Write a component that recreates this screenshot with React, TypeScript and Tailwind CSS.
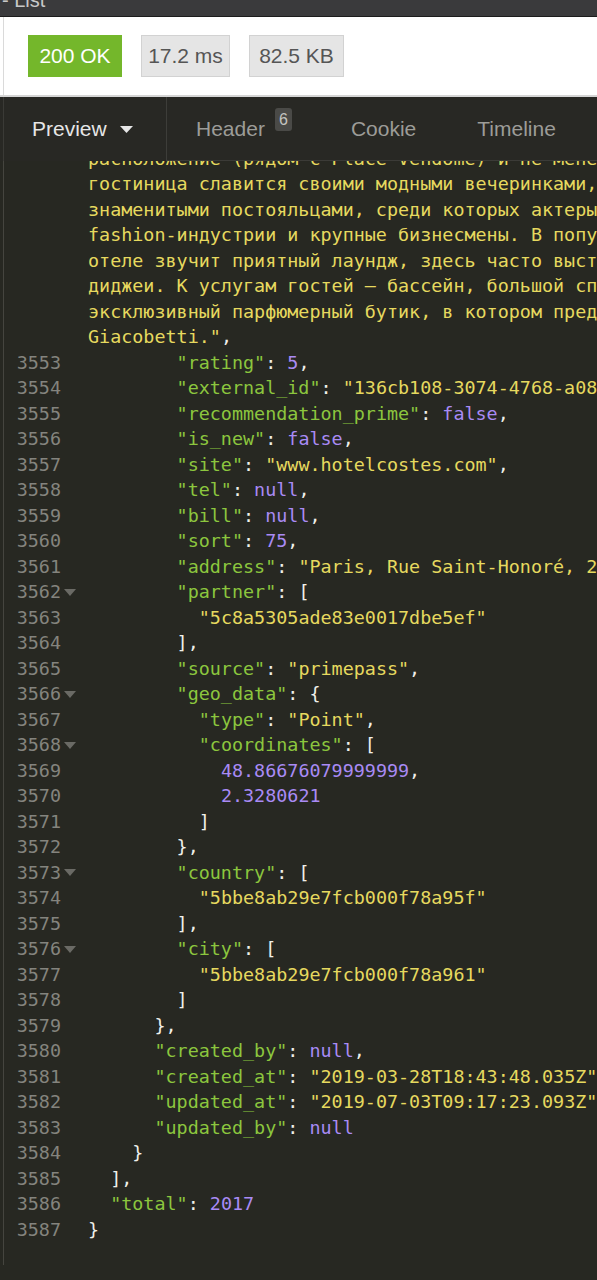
type Seg = [string, string];

const K = "text-[#8cc63e]";
const S = "text-[#e6d95f]";
const N = "text-[#a98bf5]";
const P = "text-[#f0f0ea]";

type Line = { n?: number; fold?: boolean; indent: number; segs: Seg[] };

function kv(key: string, value: string, color: string, comma = true): Seg[] {
  const out: Seg[] = [
    [`"${key}"`, K],
    [": ", P],
    [value, color],
  ];
  if (comma) out.push([",", P]);
  return out;
}

function open(key: string, br: string): Seg[] {
  return [
    [`"${key}"`, K],
    [": " + br, P],
  ];
}

const wrapped = [
  "расположение (рядом с Place Vendome) и не менее известный интерьер. Эта",
  "гостиница славится своими модными вечеринками, на которые приходят",
  "знаменитыми постояльцами, среди которых актеры, музыканты, звезды",
  "fashion-индустрии и крупные бизнесмены. В популярном ресторане при",
  "отеле звучит приятный лаундж, здесь часто выступают известные",
  "диджеи. К услугам гостей — бассейн, большой спа-центр, фитнес-зал и",
  "эксклюзивный парфюмерный бутик, в котором представлены ароматы Olivia",
];

const lines: Line[] = [
  ...wrapped.map((t) => ({ indent: 0, segs: [[t, S]] as Seg[] })),
  { indent: 0, segs: [['Giacobetti."', S], [",", P]] },
  { n: 3553, indent: 8, segs: kv("rating", "5", N) },
  { n: 3554, indent: 8, segs: kv("external_id", '"136cb108-3074-4768-a08e-5d2f1c9b7e41"', S) },
  { n: 3555, indent: 8, segs: kv("recommendation_prime", "false", N) },
  { n: 3556, indent: 8, segs: kv("is_new", "false", N) },
  { n: 3557, indent: 8, segs: kv("site", '"www.hotelcostes.com"', S) },
  { n: 3558, indent: 8, segs: kv("tel", "null", N) },
  { n: 3559, indent: 8, segs: kv("bill", "null", N) },
  { n: 3560, indent: 8, segs: kv("sort", "75", N) },
  { n: 3561, indent: 8, segs: kv("address", '"Paris, Rue Saint-Honoré, 239"', S) },
  { n: 3562, fold: true, indent: 8, segs: open("partner", "[") },
  { n: 3563, indent: 10, segs: [['"5c8a5305ade83e0017dbe5ef"', S]] },
  { n: 3564, indent: 8, segs: [["],", P]] },
  { n: 3565, indent: 8, segs: kv("source", '"primepass"', S) },
  { n: 3566, fold: true, indent: 8, segs: open("geo_data", "{") },
  { n: 3567, indent: 10, segs: kv("type", '"Point"', S) },
  { n: 3568, fold: true, indent: 10, segs: open("coordinates", "[") },
  { n: 3569, indent: 12, segs: [["48.86676079999999", N], [",", P]] },
  { n: 3570, indent: 12, segs: [["2.3280621", N]] },
  { n: 3571, indent: 10, segs: [["]", P]] },
  { n: 3572, indent: 8, segs: [["},", P]] },
  { n: 3573, fold: true, indent: 8, segs: open("country", "[") },
  { n: 3574, indent: 10, segs: [['"5bbe8ab29e7fcb000f78a95f"', S]] },
  { n: 3575, indent: 8, segs: [["],", P]] },
  { n: 3576, fold: true, indent: 8, segs: open("city", "[") },
  { n: 3577, indent: 10, segs: [['"5bbe8ab29e7fcb000f78a961"', S]] },
  { n: 3578, indent: 8, segs: [["]", P]] },
  { n: 3579, indent: 6, segs: [["},", P]] },
  { n: 3580, indent: 6, segs: kv("created_by", "null", N) },
  { n: 3581, indent: 6, segs: kv("created_at", '"2019-03-28T18:43:48.035Z"', S) },
  { n: 3582, indent: 6, segs: kv("updated_at", '"2019-07-03T09:17:23.093Z"', S) },
  { n: 3583, indent: 6, segs: kv("updated_by", "null", N, false) },
  { n: 3584, indent: 4, segs: [["}", P]] },
  { n: 3585, indent: 2, segs: [["],", P]] },
  { n: 3586, indent: 2, segs: kv("total", "2017", N, false) },
  { n: 3587, indent: 0, segs: [["}", P]] },
];

function CodeLine({ line }: { line: Line }) {
  return (
    <div className="flex h-[25.5px] items-center whitespace-pre">
      <div className="w-[57px] shrink-0 text-right text-[#84847e]">{line.n ?? ""}</div>
      <div className="w-[27px] shrink-0 pl-[3px]">
        {line.fold && (
          <svg width="12" height="7" viewBox="0 0 12 7">
            <path d="M0 0h12L6 7z" fill="#6a6a65" />
          </svg>
        )}
      </div>
      <div>
        {" ".repeat(line.indent)}
        {line.segs.map(([t, c], i) => (
          <span key={i} className={c}>
            {t}
          </span>
        ))}
      </div>
    </div>
  );
}

export default function App() {
  return (
    <div className="h-screen flex flex-col overflow-hidden font-['Liberation_Sans',Arial,sans-serif]">
      {/* window title strip, cut off at top */}
      <div className="h-[17px] shrink-0 overflow-hidden bg-[#3a3a3c] border-b border-[#1c1c1c]">
        <div className="-mt-[12px] pl-[2px] text-[20px] leading-[24px] text-[#c8c8c8]">- List</div>
      </div>

      {/* status row */}
      <div className="shrink-0 bg-white pl-[3px] border-b-2 border-[#d5d5d5]">
        <div className="h-[78px] border-l border-[#dadada] flex items-center pl-[24px] gap-[19px]">
          <div className="w-[94px] h-[42px] flex items-center justify-center bg-[#74b72b] text-white text-[21px]">
            200 OK
          </div>
          <div className="w-[89px] h-[42px] flex items-center justify-center bg-[#e5e5e5] border border-[#d2d2d2] text-[#555] text-[21px]">
            17.2 ms
          </div>
          <div className="w-[95px] h-[42px] flex items-center justify-center bg-[#e5e5e5] border border-[#d2d2d2] text-[#555] text-[21px]">
            82.5 KB
          </div>
        </div>
      </div>

      {/* tabs */}
      <div className="shrink-0 bg-[#282824] pl-[3px]">
        <div className="h-[64px] border-l border-[#3a3a36] flex items-stretch text-[21px]">
          <div className="w-[163px] flex items-center pl-[28px] border-r border-[#3d3d39] text-[#e6e6e6]">
            Preview
            <svg className="ml-[13px]" width="13" height="7" viewBox="0 0 13 7">
              <path d="M0 0h13L6.5 7z" fill="#e6e6e6" />
            </svg>
          </div>
          <div className="flex-1 flex items-center pl-[29px] border-b border-[#3b3b37] text-[#9c9c98]">
            <span>Header</span>
            <span className="ml-[10px] -mt-[18px] w-[17px] h-[23px] rounded-[3px] bg-[#4a4a47] text-[#c4c4c0] text-[16px] flex items-center justify-center">
              6
            </span>
            <span className="ml-[59px]">Cookie</span>
            <span className="ml-[61px]">Timeline</span>
          </div>
        </div>
      </div>

      {/* code */}
      <div className="flex-1 overflow-hidden bg-[#272822] pl-[3px]">
        <div className="h-full border-l border-[#45453f]">
          <div className="-mt-[15px] font-['DejaVu_Sans_Mono',monospace] text-[18.4px] text-[#f0f0ea]">
            {lines.map((l, i) => (
              <CodeLine key={i} line={l} />
            ))}
          </div>
        </div>
      </div>
    </div>
  );
}
